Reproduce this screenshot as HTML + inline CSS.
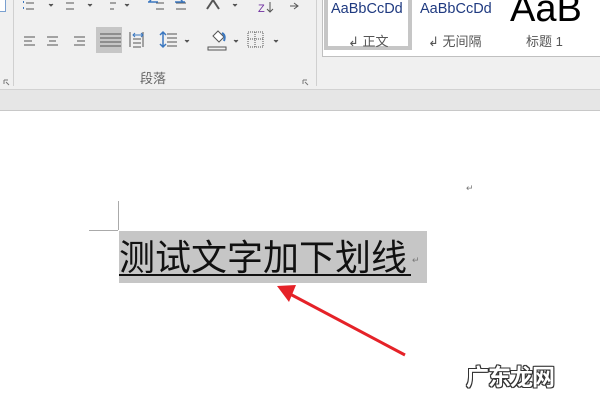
<!DOCTYPE html>
<html><head><meta charset="utf-8"><style>
*{margin:0;padding:0}
body{width:600px;height:400px;overflow:hidden;background:#fff;position:relative;font-family:"Liberation Sans","Noto Sans CJK SC",sans-serif}
.a{position:absolute}
</style></head><body>
<div class="a" style="left:0;top:0;width:600px;height:89px;background:#f0f0f0;border-bottom:1px solid #d2d2d2"></div>
<div class="a" style="left:0;top:90px;width:600px;height:20px;background:#e6e6e6;border-bottom:1px solid #c8c8c8"></div>
<div class="a" style="left:13px;top:0;width:1px;height:86px;background:#d0d0d0"></div>
<div class="a" style="left:316px;top:0;width:1px;height:86px;background:#d0d0d0"></div>
<div class="a" style="left:0;top:0;width:5px;height:11px;border:1px solid #7aa0d0;border-left:none;border-top:none;background:#fff"></div>
<svg class="a" style="left:0;top:0" width="320" height="90">
<g stroke="#555" stroke-width="1" fill="none">
<path d="M26 3h8M26 9h8M66 3h8M66 9h8M110 3h6M110 9h4"/>
<path d="M156 3h8M156 9h8M176 3h10M176 9h10"/>
<path d="M24 37h11M24 41h8M24 45h11M47 37h11M49 41h7M47 45h11M74 37h11M77 41h8M74 45h11"/>
<path d="M130 32v15M143 32v15M133 35h8M133 39h8M133 43h8M133 47h8"/>
<path d="M167 34h10M167 38h10M167 42h10M167 46h10"/>
<path d="M208 47h18v3h-18z"/>
<path d="M248 32h15v15h-15z" stroke-dasharray="1 1"/>
<path d="M255 32v15M248 39h15" stroke-dasharray="1 1"/>
<path d="M207 9l6-9l6 9" stroke-width="2"/>
</g>
<rect x="96" y="27" width="26" height="26" fill="#c6c6c6"/>
<path d="M100 34h21M100 38h21M100 42h21M100 46h21" stroke="#555"/>
<path d="M163 32v15M160 35l3-3 3 3M160 44l3 3 3-3" stroke="#3a77c0" stroke-width="1.5" fill="none"/>
<path d="M133 35h10M135 33l-2 2 2 2M141 33l2 2-2 2" stroke="#3a77c0" fill="none"/>
<path d="M213 36l5-5 6 6-5 5z" fill="#fff" stroke="#555"/>
<path d="M222 33q4 2 2 8" stroke="#3a77c0" stroke-width="2" fill="none"/>
<path d="M148 2h10M149 2l2-2" stroke="#3a77c0" stroke-width="1.5"/>
<path d="M175 2h10M183 2l-2-2" stroke="#3a77c0" stroke-width="1.5"/>
<path d="M23 2h1M23 8h1" stroke="#3a77c0" stroke-width="2"/>
<text x="258" y="12" font-size="11" fill="#7030a0">Z</text>
<path d="M270 2v10M267 9l3 3 3-3" stroke="#555" fill="none"/>
<path d="M290 6h8M294 3l4 3-4 3" stroke="#555" fill="none"/>
<path d="M49 4l2 2 2-2M88 4l2 2 2-2M125 4l2 2 2-2M233 4l2 2 2-2M185 40l2 2 2-2M234 40l2 2 2-2M274 40l2 2 2-2" fill="#555" stroke="#555"/>
<path d="M4 80h4M4 80v4M6 82l3 3" stroke="#777" fill="none"/>
<path d="M303 80h4M303 80v4M305 82l3 3" stroke="#777" fill="none"/>
</svg>
<div class="a" style="left:140px;top:68px;font-size:13px;color:#666">段落</div>
<div class="a" style="left:322px;top:0;width:278px;height:56px;background:#fff;border-bottom:1px solid #c0c0c0;border-left:1px solid #c0c0c0"></div>
<div class="a" style="left:324px;top:0;width:80px;height:46px;border:4px solid #c6c6c6;border-top:none"></div>
<div class="a" style="left:331px;top:1px;font-size:14.5px;color:#1f3a80;width:74px;overflow:hidden;white-space:nowrap">AaBbCcDd</div>
<div class="a" style="left:420px;top:1px;font-size:14.5px;color:#1f3a80;width:74px;overflow:hidden;white-space:nowrap">AaBbCcDd</div>
<div class="a" style="left:510px;top:-12px;font-size:38px;color:#000;width:74px;overflow:hidden;white-space:nowrap">AaBb</div>
<div class="a" style="left:348px;top:31px;font-size:13px;color:#555">↲ 正文</div>
<div class="a" style="left:428px;top:31px;font-size:13px;color:#555">↲ 无间隔</div>
<div class="a" style="left:526px;top:31px;font-size:13px;color:#555">标题 1</div>
<div class="a" style="left:118px;top:201px;width:1px;height:29px;background:#aaa"></div>
<div class="a" style="left:89px;top:230px;width:29px;height:1px;background:#aaa"></div>
<div class="a" style="left:119px;top:231px;width:308px;height:52px;background:#c6c6c6"></div>
<div class="a" style="left:119px;top:234px;font-size:36px;line-height:42px;color:#111;font-family:'WenQuanYi Zen Hei','Noto Sans CJK SC',sans-serif;white-space:nowrap">测试文字加下划线</div>
<div class="a" style="left:119px;top:274px;width:292px;height:2px;background:#111"></div>
<div class="a" style="left:412px;top:255px;font-size:9px;color:#777">↵</div>
<div class="a" style="left:466px;top:183px;font-size:9px;color:#777">↵</div>
<svg class="a" style="left:0;top:0" width="600" height="400">
<line x1="405" y1="355" x2="290" y2="294" stroke="#e52228" stroke-width="3"/>
<polygon points="277,286 296,285 289,302" fill="#e52228"/>
</svg>
<div class="a" style="left:466px;top:358px;font-size:23px;font-weight:bold;color:#fff;font-family:'WenQuanYi Zen Hei','Noto Sans CJK SC',sans-serif;letter-spacing:-1px;text-shadow:1px 1px 0 #333,-1px -1px 0 #333,1px -1px 0 #333,-1px 1px 0 #333,0 1px 0 #333,0 -1px 0 #333,1px 0 0 #333,-1px 0 0 #333">广东龙网</div>
</body></html>
